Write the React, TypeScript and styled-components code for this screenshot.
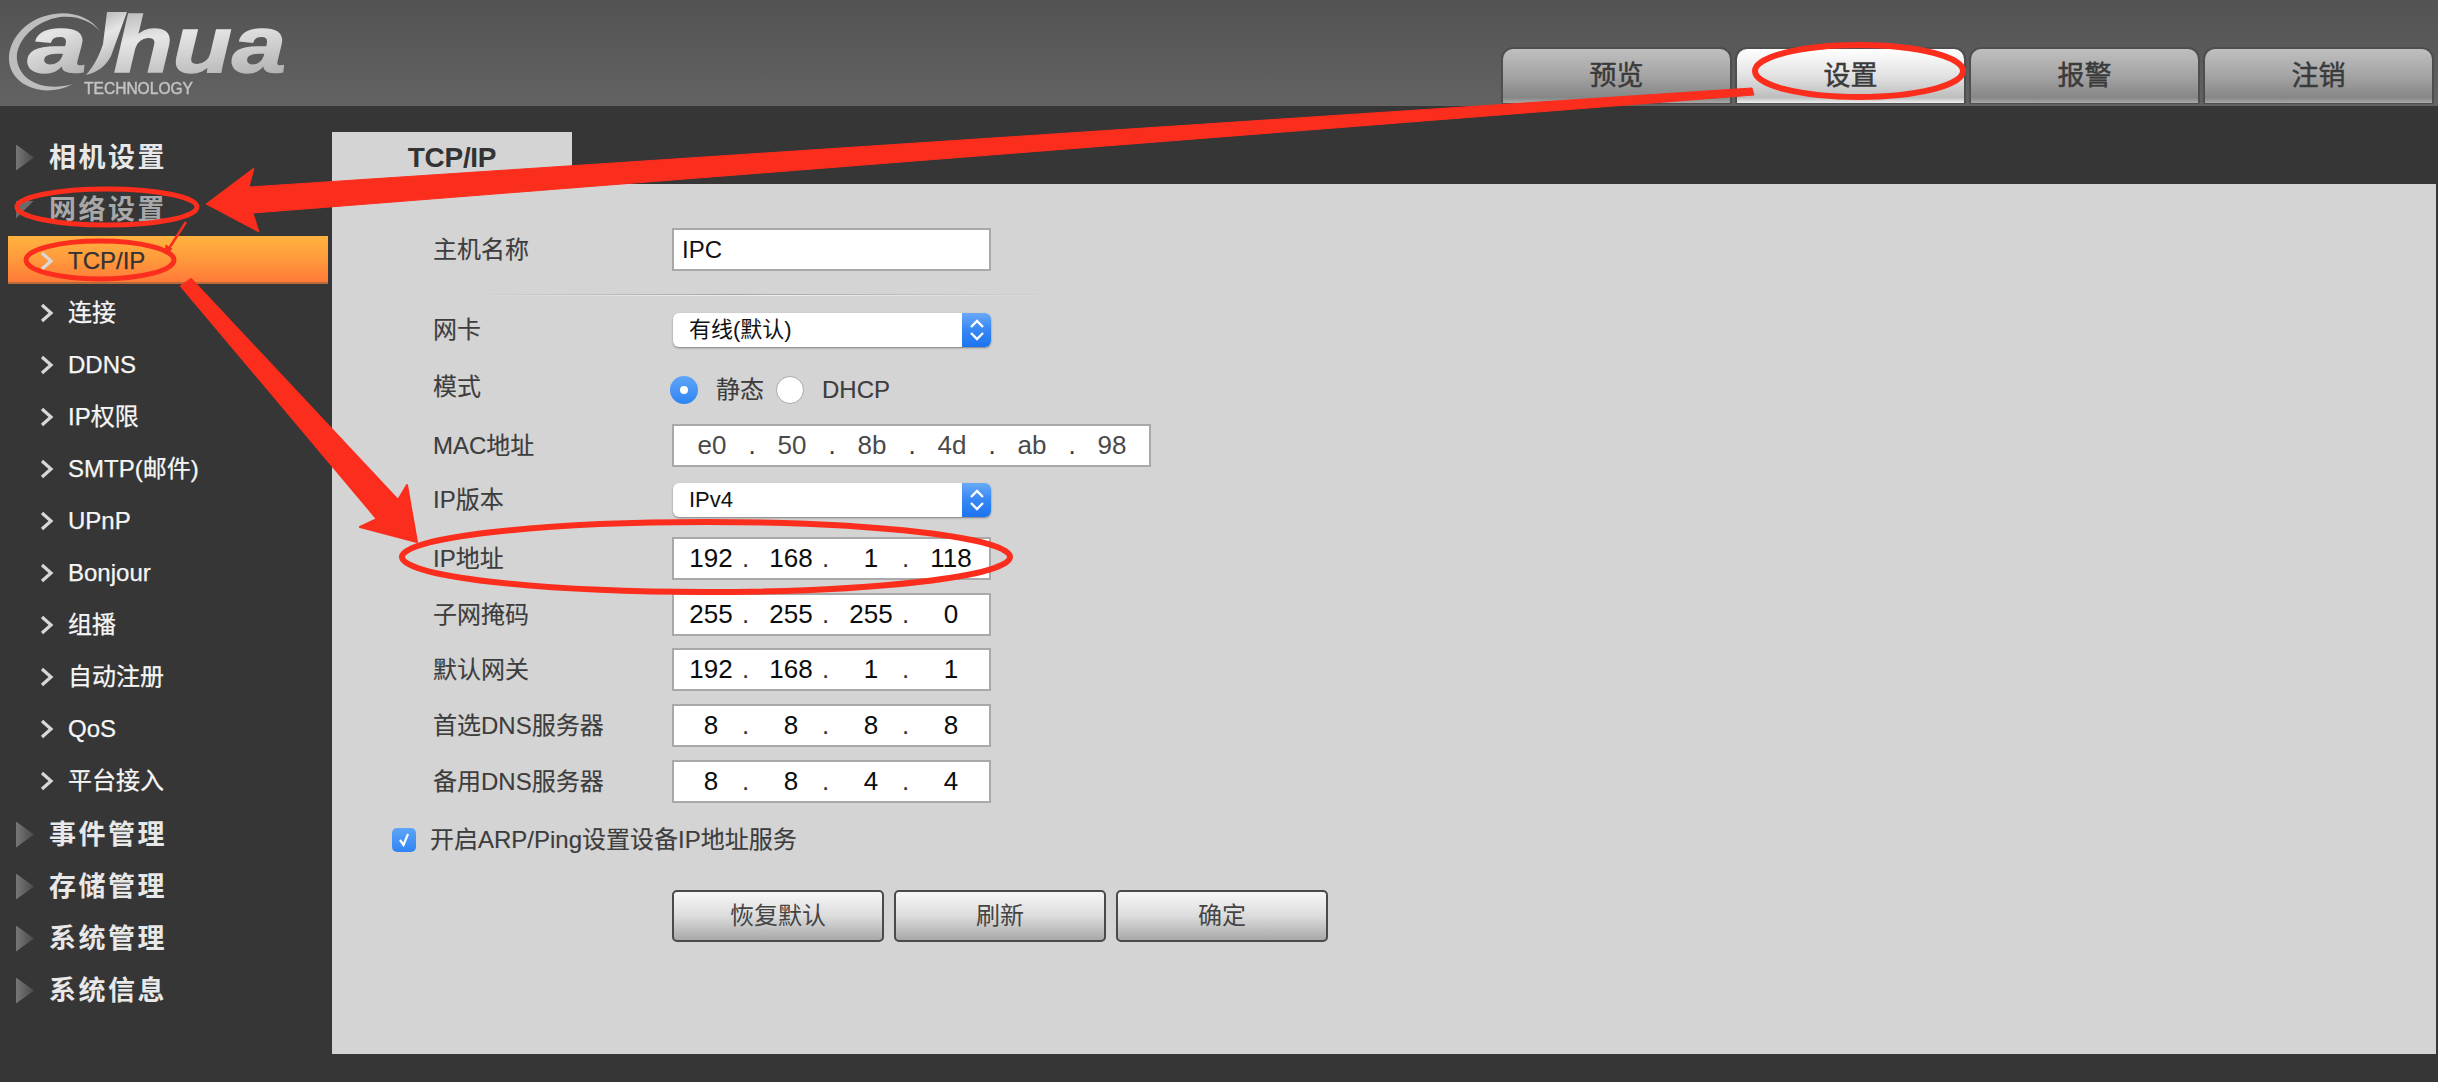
import styled, { createGlobalStyle } from 'styled-components'

const FONT = '"Liberation Sans", "Noto Sans CJK SC", sans-serif'
const RED = '#fb2d1d'

const GlobalStyle = createGlobalStyle`
  html, body {
    margin: 0;
    padding: 0;
    background: #363636;
    font-family: ${FONT};
  }
  * {
    box-sizing: border-box;
  }
`

const TABS = ['预览', '设置', '报警', '注销']
const SUB_ITEMS = ['TCP/IP', '连接', 'DDNS', 'IP权限', 'SMTP(邮件)', 'UPnP', 'Bonjour', '组播', '自动注册', 'QoS', '平台接入']
const BOTTOM_MENUS = ['事件管理', '存储管理', '系统管理', '系统信息']

function Logo(): JSX.Element {
  return (
    <LogoSvg width="300" height="106" viewBox="0 0 300 106">
      <defs>
        <linearGradient id="logoFill" x1="0" y1="0" x2="0.3" y2="1">
          <stop offset="0" stopColor="#a8a8a8" />
          <stop offset="0.45" stopColor="#e6e6e6" />
          <stop offset="1" stopColor="#b4b4b4" />
        </linearGradient>
      </defs>
      <path
        d="M100 31C90 17 72 11 54 14C26 18 8 40 9 60C10 84 42 100 73 84C46 92 20 82 17 60C15 42 34 21 60 17C78 15 92 22 100 31Z"
        fill="#bdbdbd"
      />
      <LogoWord x="21" y="72" transform="scale(1.32 1)">
        a
      </LogoWord>
      <path d="M107 12H127L111 56C106 66 98 72 86 75C94 66 99 56 103 44Z" fill="url(#logoFill)" />
      <LogoWord x="94" y="72" transform="scale(1.21 1)">
        hua
      </LogoWord>
      <LogoSub x="84" y="94" textLength="109" lengthAdjust="spacingAndGlyphs">
        TECHNOLOGY
      </LogoSub>
    </LogoSvg>
  )
}

function Chevron(): JSX.Element {
  return (
    <ChevronSvg width="14" height="20" viewBox="0 0 14 20">
      <polyline points="2,2 11,10 2,18" fill="none" stroke="currentColor" strokeWidth="3.2" />
    </ChevronSvg>
  )
}

function SelectBox({ value }: { value: string }): JSX.Element {
  return (
    <Select>
      <SelectValue>{value}</SelectValue>
      <SelectCaret>
        <svg width="16" height="24" viewBox="0 0 16 24">
          <path d="M2 9L8 3L14 9M2 15L8 21L14 15" fill="none" stroke="#fff" strokeWidth="2.4" />
        </svg>
      </SelectCaret>
    </Select>
  )
}

function IpInput({ parts }: { parts: string[] }): JSX.Element {
  return (
    <InputBox $pad={8}>
      {parts.map((part, i) => (
        <IpOctet key={i}>
          <IpNumber>{part}</IpNumber>
          {i < parts.length - 1 && <IpDot>.</IpDot>}
        </IpOctet>
      ))}
    </InputBox>
  )
}

function MacInput({ parts }: { parts: string[] }): JSX.Element {
  return (
    <InputBox $pad={3} $wide>
      {parts.map((part, i) => (
        <MacOctet key={i}>
          <MacNumber>{part}</MacNumber>
          {i < parts.length - 1 && <MacDot>.</MacDot>}
        </MacOctet>
      ))}
    </InputBox>
  )
}

function Annotations(): JSX.Element {
  return (
    <Overlay viewBox="0 0 2438 1082">
      <g fill="none" stroke={RED}>
        <ellipse cx="1859" cy="71" rx="104" ry="26" strokeWidth="6" />
        <ellipse cx="107" cy="207" rx="90" ry="18" strokeWidth="5" />
        <ellipse cx="100" cy="260" rx="74" ry="19" strokeWidth="5" />
        <ellipse cx="706" cy="557" rx="304" ry="35" strokeWidth="6" />
        <line x1="186" y1="222" x2="168" y2="250" strokeWidth="2.5" />
      </g>
      <g fill={RED} stroke={RED} strokeLinejoin="round">
        <polygon points="206,204 254,168 249,187 1752,88 1754,95 253,213 259,232" strokeWidth="1" />
        <polygon points="417,542 407,485 398,500 191,279 181,286 377,519 360,527" strokeWidth="2" />
        <polygon points="165,254 166,245 172,249" strokeWidth="1" />
      </g>
    </Overlay>
  )
}

export default function App(): JSX.Element {
  return (
    <Page>
      <GlobalStyle />
      <Header>
        <Logo />
        <TabBar>
          {TABS.map((tab, i) => (
            <TopTab key={tab} $active={i === 1}>
              {tab}
            </TopTab>
          ))}
        </TabBar>
      </Header>
      <Body>
        <Sidebar>
          <MenuHead>
            <ClosedArrow />
            相机设置
          </MenuHead>
          <MenuHead $open>
            <OpenArrow />
            网络设置
          </MenuHead>
          {SUB_ITEMS.map((item, i) => (
            <SubItem key={item} $active={i === 0}>
              <Chevron />
              {item}
            </SubItem>
          ))}
          <BottomMenus>
            {BOTTOM_MENUS.map(menu => (
              <MenuHead key={menu}>
                <ClosedArrow />
                {menu}
              </MenuHead>
            ))}
          </BottomMenus>
        </Sidebar>
        <Main>
          <PanelTab>TCP/IP</PanelTab>
          <Panel>
            <Row>
              <Label>主机名称</Label>
              <InputBox $pad={8}>
                <PlainValue>IPC</PlainValue>
              </InputBox>
            </Row>
            <Divider />
            <Row $mt={17}>
              <Label>网卡</Label>
              <SelectBox value="有线(默认)" />
            </Row>
            <RadioRow>
              <Label $up>模式</Label>
              <Radio $checked />
              <RadioText>静态</RadioText>
              <Radio />
              <RadioText>DHCP</RadioText>
            </RadioRow>
            <Row $mt={20}>
              <Label>MAC地址</Label>
              <MacInput parts={['e0', '50', '8b', '4d', 'ab', '98']} />
            </Row>
            <Row $mt={16}>
              <Label>IP版本</Label>
              <SelectBox value="IPv4" />
            </Row>
            <Row $mt={20}>
              <Label>IP地址</Label>
              <IpInput parts={['192', '168', '1', '118']} />
            </Row>
            <Row $mt={13}>
              <Label>子网掩码</Label>
              <IpInput parts={['255', '255', '255', '0']} />
            </Row>
            <Row $mt={12}>
              <Label>默认网关</Label>
              <IpInput parts={['192', '168', '1', '1']} />
            </Row>
            <Row $mt={13}>
              <Label>首选DNS服务器</Label>
              <IpInput parts={['8', '8', '8', '8']} />
            </Row>
            <Row $mt={13}>
              <Label>备用DNS服务器</Label>
              <IpInput parts={['8', '8', '4', '4']} />
            </Row>
            <CheckRow>
              <CheckBox>
                <svg width="16" height="18" viewBox="0 0 16 18">
                  <path d="M4 9L7.5 14L12 3" fill="none" stroke="#fff" strokeWidth="2.2" />
                </svg>
              </CheckBox>
              <CheckText>开启ARP/Ping设置设备IP地址服务</CheckText>
            </CheckRow>
            <ButtonRow>
              <ActionButton>恢复默认</ActionButton>
              <ActionButton>刷新</ActionButton>
              <ActionButton>确定</ActionButton>
            </ButtonRow>
          </Panel>
        </Main>
      </Body>
      <Annotations />
    </Page>
  )
}

const Page = styled.div`
  position: relative;
  width: 2438px;
  height: 1082px;
  overflow: hidden;
  background: #363636;
  font-family: ${FONT};
`

const Header = styled.header`
  height: 106px;
  display: flex;
  justify-content: space-between;
  background: linear-gradient(180deg, #535353 0%, #5c5c5c 60%, #636363 100%);
`

const LogoSvg = styled.svg`
  display: block;
  filter: blur(0.5px);
`

const LogoWord = styled.text`
  font-family: 'Liberation Sans', sans-serif;
  font-weight: bold;
  font-style: italic;
  font-size: 80px;
  fill: url(#logoFill);
  stroke: url(#logoFill);
  stroke-width: 1.6px;
`

const LogoSub = styled.text`
  font-family: 'Liberation Sans', sans-serif;
  font-size: 16.5px;
  fill: #c2c2c2;
  stroke: #c2c2c2;
  stroke-width: 0.5px;
`

const TabBar = styled.nav`
  display: flex;
  align-items: flex-end;
  column-gap: 3px;
  padding: 0 4px 2px 0;
`

const TopTab = styled.div<{ $active?: boolean }>`
  width: 231px;
  height: 57px;
  display: flex;
  align-items: center;
  justify-content: center;
  padding-bottom: 1px;
  font-size: 27px;
  line-height: 34px;
  color: #3a3a3a;
  -webkit-text-stroke: 0.5px #3a3a3a;
  border: 2px solid #4e4e4e;
  border-bottom-width: 1px;
  border-radius: 12px 12px 2px 2px;
  background: ${({ $active }) =>
    $active
      ? 'linear-gradient(180deg, #ffffff 0%, #e2e2e2 50%, #bdbdbd 90%, #f0f0f0 100%)'
      : 'linear-gradient(180deg, #bfbfbf 0%, #a4a4a4 50%, #868686 90%, #a8a8a8 100%)'};
`

const Body = styled.div`
  display: flex;
  height: 976px;
`

const Sidebar = styled.aside`
  width: 332px;
  flex: none;
  padding: 26px 4px 0 8px;
`

const BottomMenus = styled.div`
  margin-top: 2px;
`

const MenuHead = styled.div<{ $open?: boolean }>`
  height: 52px;
  display: flex;
  align-items: center;
  column-gap: 15px;
  padding-bottom: 1px;
  font-size: 27px;
  line-height: 34px;
  font-weight: bold;
  letter-spacing: 2.5px;
  color: ${({ $open }) => ($open ? '#a8a8a8' : '#e8e8e8')};
`

const ClosedArrow = styled.span`
  width: 18px;
  height: 26px;
  margin-left: 8px;
  flex: none;
  clip-path: polygon(0 0, 100% 50%, 0 100%);
  background: linear-gradient(90deg, #777 0%, #4a4a4a 100%);
`

const OpenArrow = styled.span`
  width: 18px;
  height: 18px;
  margin: 0 0 0 8px;
  flex: none;
  clip-path: polygon(0 0, 100% 0, 0 100%);
  background: #6a6a6a;
`

const SubItem = styled.div<{ $active?: boolean }>`
  height: ${({ $active }) => ($active ? '48px' : '52px')};
  margin: ${({ $active }) => ($active ? '0 0 3px' : '0')};
  display: flex;
  align-items: center;
  column-gap: 14px;
  padding: ${({ $active }) => ($active ? '3px 0 0 32px' : '0 0 0 32px')};
  font-size: 24px;
  line-height: 30px;
  color: ${({ $active }) => ($active ? '#333' : '#f6f6f6')};
  -webkit-text-stroke: 0.25px ${({ $active }) => ($active ? '#333' : '#f6f6f6')};
  background: ${({ $active }) =>
    $active ? 'linear-gradient(180deg, #ffb33f 0%, #ff9a3c 50%, #ff7a38 100%)' : 'none'};
  border-bottom: ${({ $active }) => ($active ? '2px solid #b86a3a' : 'none')};
`

const ChevronSvg = styled.svg`
  flex: none;
  color: #d8d8d8;
`

const Main = styled.main`
  flex: 1;
  padding: 26px 2px 0 0;
  display: flex;
  flex-direction: column;
  align-items: flex-start;
`

const PanelTab = styled.div`
  width: 240px;
  height: 52px;
  display: flex;
  align-items: center;
  justify-content: center;
  font-size: 28px;
  font-weight: bold;
  letter-spacing: -0.3px;
  color: #333;
  background: #d4d4d4;
`

const Panel = styled.section`
  width: 100%;
  height: 870px;
  padding-top: 44px;
  background: #d4d4d4;
`

const Row = styled.div<{ $mt?: number }>`
  display: flex;
  align-items: center;
  margin-top: ${({ $mt }) => $mt ?? 0}px;
  padding-left: 101px;
`

const RadioRow = styled(Row)`
  height: 28px;
  margin-top: 29px;
`

const Label = styled.div<{ $up?: boolean }>`
  width: 239px;
  flex: none;
  margin-bottom: ${({ $up }) => ($up ? '6px' : '0')};
  font-size: 24px;
  line-height: 28px;
  color: #3d3d3d;
  -webkit-text-stroke: 0.15px #3d3d3d;
`

const InputBox = styled.div<{ $pad: number; $wide?: boolean }>`
  width: ${({ $wide }) => ($wide ? '479px' : '319px')};
  height: 43px;
  display: flex;
  align-items: center;
  padding-left: ${({ $pad }) => $pad}px;
  background: #fff;
  border: 2px solid #a9a9a9;
`

const PlainValue = styled.span`
  font-size: 24px;
  color: #111;
`

const IpOctet = styled.div`
  width: 80px;
  flex: none;
  display: flex;
  margin-left: -2px;
  & + & {
    margin-left: 0;
  }
`

const IpNumber = styled.span`
  width: 62px;
  text-align: center;
  font-size: 26px;
  color: #0c0c0c;
`

const IpDot = styled.span`
  width: 18px;
  font-size: 26px;
  color: #333;
`

const MacOctet = styled.div`
  width: 80px;
  flex: none;
  display: flex;
  margin-left: -2px;
  & + & {
    margin-left: 0;
  }
`

const MacNumber = styled.span`
  width: 74px;
  text-align: center;
  font-size: 26px;
  color: #4a4a4a;
`

const MacDot = styled.span`
  width: 6px;
  display: flex;
  justify-content: center;
  font-size: 26px;
  color: #333;
`

const Divider = styled.div`
  width: 590px;
  height: 2px;
  margin: 23px 0 0 138px;
  background:
    linear-gradient(90deg, transparent, #a6a6a6 45%, transparent) top / 100% 1px no-repeat,
    linear-gradient(90deg, transparent, #f0f0f0 50%, transparent) bottom / 100% 1px no-repeat;
`

const Select = styled.div`
  width: 318px;
  height: 34px;
  margin-left: 1px;
  display: flex;
  align-items: center;
  justify-content: space-between;
  background: #fff;
  border-radius: 6px;
  box-shadow: 0 1px 2px rgba(0, 0, 0, 0.4);
  overflow: hidden;
`

const SelectValue = styled.span`
  padding-left: 16px;
  font-size: 22px;
  line-height: 30px;
  color: #111;
`

const SelectCaret = styled.span`
  width: 29px;
  height: 100%;
  display: flex;
  align-items: center;
  justify-content: center;
  background: linear-gradient(180deg, #6aa9f6 0%, #3a8af5 45%, #1a73ef 100%);
`

const Radio = styled.span<{ $checked?: boolean }>`
  width: 28px;
  height: 28px;
  flex: none;
  margin-left: ${({ $checked }) => ($checked ? '-2px' : '0')};
  display: flex;
  align-items: center;
  justify-content: center;
  border-radius: 50%;
  background: ${({ $checked }) =>
    $checked ? 'linear-gradient(180deg, #5fa5f7 0%, #2f84f3 100%)' : '#fff'};
  border: ${({ $checked }) => ($checked ? 'none' : '1px solid #aaa')};

  &::after {
    content: '';
    display: ${({ $checked }) => ($checked ? 'block' : 'none')};
    width: 8px;
    height: 8px;
    border-radius: 50%;
    background: #fff;
  }
`

const RadioText = styled.span`
  margin: 0 12px 0 18px;
  font-size: 24px;
  line-height: 28px;
  color: #3d3d3d;
  -webkit-text-stroke: 0.15px #3d3d3d;
`

const CheckRow = styled.label`
  display: flex;
  align-items: center;
  column-gap: 14px;
  height: 24px;
  margin-top: 25px;
  padding-left: 60px;
`

const CheckText = styled.span`
  font-size: 24px;
  line-height: 24px;
  color: #3d3d3d;
  -webkit-text-stroke: 0.15px #3d3d3d;
`

const CheckBox = styled.span`
  width: 24px;
  height: 24px;
  flex: none;
  display: flex;
  align-items: center;
  justify-content: center;
  border-radius: 5px;
  background: linear-gradient(180deg, #5fa5f7 0%, #2f84f3 100%);
`

const ButtonRow = styled.div`
  display: flex;
  column-gap: 10px;
  margin-top: 38px;
  padding-left: 340px;
`

const ActionButton = styled.button`
  width: 212px;
  height: 52px;
  padding: 0;
  font-family: ${FONT};
  font-size: 24px;
  line-height: 30px;
  color: #444;
  border: 2px solid #4a4a4a;
  border-radius: 5px;
  background: linear-gradient(180deg, #f7f7f7 0%, #dcdcdc 50%, #a9a9a9 100%);
`

const Overlay = styled.svg`
  position: absolute;
  inset: 0;
  width: 2438px;
  height: 1082px;
  pointer-events: none;
`
